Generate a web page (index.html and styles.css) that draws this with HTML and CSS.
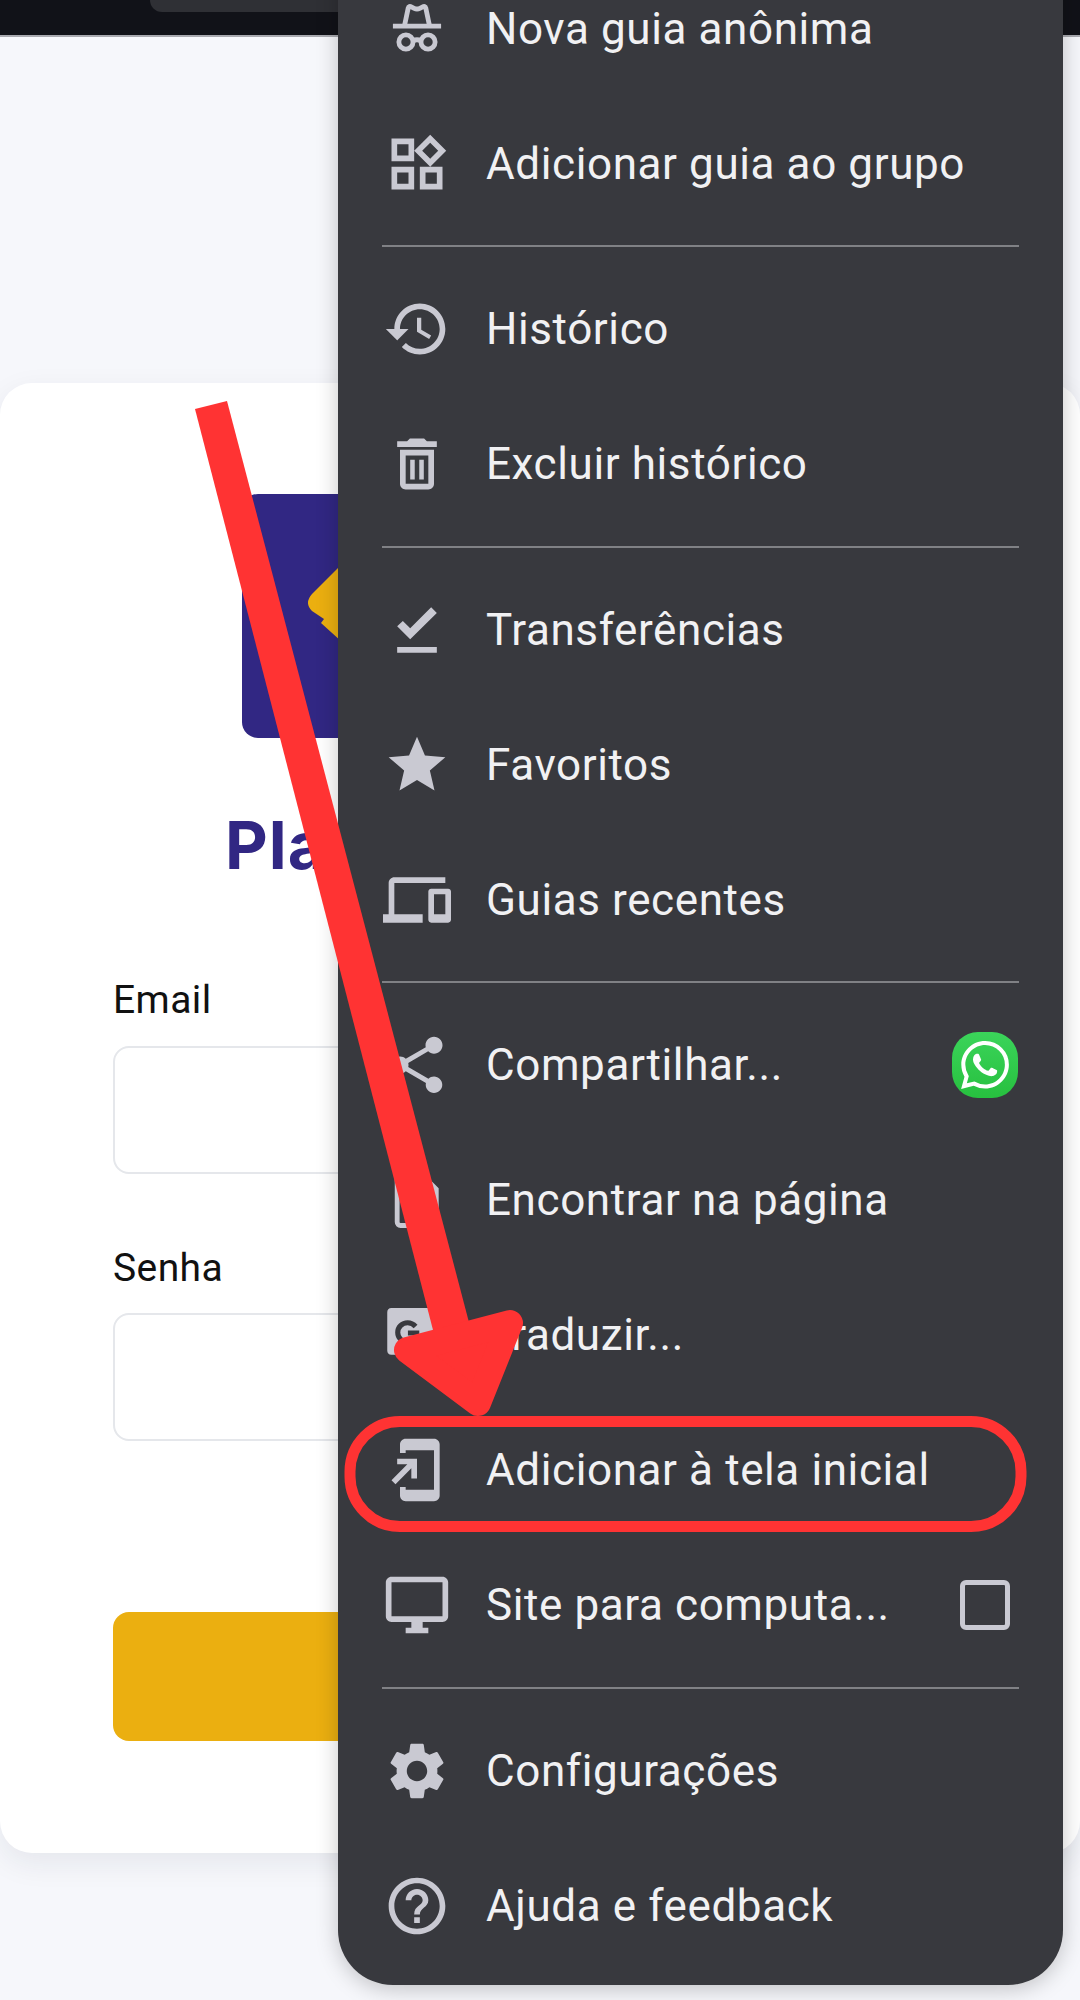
FILE: index.html
```html
<!doctype html>
<html lang="pt-BR">
<head>
    <meta charset="utf-8">
    <title>Adicionar à tela inicial</title>
    <link rel="stylesheet" href="styles.css">
</head>

<body>

    <!-- barra do navegador -->
    <div class="topbar"><div class="urlbar"></div></div>

    <!-- pagina de login -->
    <div class="card">
        <svg class="logo" width="596" height="244" viewBox="0 0 596 244">
            <rect width="596" height="244" rx="16" fill="#312783"/>
            <path d="M100 70 L70 100 Q62 109 70 117 L82 125 L79 129 L100 148 Z" fill="#ebaf10"/>
        </svg>
        <h1 class="title">Pla</h1>
        <label class="label label-first">Email</label>
        <input class="field" type="text">
        <label class="label">Senha</label>
        <input class="field" type="password">
        <button class="btn"></button>
    </div>

    <!-- menu do chrome -->
    <div class="menu">
        <div class="row">
            <svg class="ico" viewBox="0 0 24 24"><path class="line" d="M7.6 10.800 8.900 4.600C9 4 9.500 3.900 10 4.200l1 .5c.6.3 1.400.3 2 0l1-.5c.5-.3 1-.2 1.100.4l1.300 6.200"/><path class="line" d="M3.500 11h17"/><circle class="line" cx="8.100" cy="16.600" r="2.500"/><circle class="line" cx="15.900" cy="16.600" r="2.500"/><path class="line" d="M10.600 16.200c.9-.5 1.900-.5 2.800 0"/></svg>
            <span class="txt">Nova guia anônima</span>
        </div>
        <div class="row">
            <svg class="ico" viewBox="0 0 24 24"><path d="M16.66 4.52l2.83 2.83-2.83 2.83-2.83-2.83 2.83-2.83M9 5v4H5V5h4m10 10v4h-4v-4h4M9 15v4H5v-4h4m7.66-13.31L11 7.34 16.66 13l5.66-5.66-5.66-5.65zM11 3H3v8h8V3zm10 10h-8v8h8v-8zm-10 0H3v8h8v-8z"/></svg>
            <span class="txt">Adicionar guia ao grupo</span>
        </div>
        <div class="sep"></div>
        <div class="row">
            <svg class="ico" viewBox="0 0 24 24"><path d="M13 3c-4.97 0-9 4.03-9 9H1l3.89 3.89.07.14L9 12H6c0-3.87 3.13-7 7-7s7 3.13 7 7-3.13 7-7 7c-1.93 0-3.68-.79-4.94-2.06l-1.42 1.42C8.27 19.99 10.51 21 13 21c4.97 0 9-4.03 9-9s-4.03-9-9-9zm-1 5v5l4.28 2.54.72-1.21-3.5-2.08V8H12z"/></svg>
            <span class="txt">Histórico</span>
        </div>
        <div class="row">
            <svg class="ico" viewBox="0 0 24 24"><path d="M6 19c0 1.1.9 2 2 2h8c1.1 0 2-.9 2-2V7H6v12zM8 9h8v10H8V9zm7.5-5l-1-1h-5l-1 1H5v2h14V4h-3.5z"/><path d="M9.600 10.500h1.600v7H9.600zM12.800 10.500h1.600v7h-1.600z"/></svg>
            <span class="txt">Excluir histórico</span>
        </div>
        <div class="sep"></div>
        <div class="row">
            <svg class="ico" viewBox="0 0 24 24"><path d="M5 18h14v2H5v-2zm4.6-2.7L5 10.7l2-1.9 2.6 2.6L17 4l2 2-9.4 9.3z"/></svg>
            <span class="txt">Transferências</span>
        </div>
        <div class="row">
            <svg class="ico" viewBox="0 0 24 24"><path d="M12 17.27L18.18 21l-1.64-7.03L22 9.24l-7.19-.61L12 2 9.19 8.63 2 9.24l5.46 4.73L5.82 21z"/></svg>
            <span class="txt">Favoritos</span>
        </div>
        <div class="row">
            <svg class="ico" viewBox="0 0 24 24"><path d="M4 6h18V4H4c-1.1 0-2 .9-2 2v11H0v3h14v-3H4V6zm19 2h-6c-.55 0-1 .45-1 1v10c0 .55.45 1 1 1h6c.55 0 1-.45 1-1V9c0-.55-.45-1-1-1zm-1 9h-4v-7h4v7z"/></svg>
            <span class="txt">Guias recentes</span>
        </div>
        <div class="sep"></div>
        <div class="row">
            <svg class="ico" viewBox="0 0 24 24"><path d="M18 16.08c-.76 0-1.44.3-1.96.77L8.91 12.7c.05-.23.09-.46.09-.7s-.04-.47-.09-.7l7.05-4.11c.54.5 1.25.81 2.04.81 1.66 0 3-1.34 3-3s-1.34-3-3-3-3 1.34-3 3c0 .24.04.47.09.7L8.04 9.81C7.5 9.31 6.79 9 6 9c-1.66 0-3 1.34-3 3s1.34 3 3 3c.79 0 1.5-.31 2.04-.81l7.12 4.16c-.05.21-.08.43-.08.65 0 1.61 1.31 2.92 2.92 2.92 1.61 0 2.92-1.31 2.92-2.92s-1.31-2.92-2.92-2.92z"/></svg>
            <span class="txt">Compartilhar...</span>
            <div class="trail">
                <div class="wa">
                    <svg width="48" height="48" viewBox="0 0 24 24"><path fill="#fff" d="M17.472 14.382c-.297-.149-1.758-.867-2.03-.967-.273-.099-.471-.148-.67.15-.197.297-.767.966-.94 1.164-.173.199-.347.223-.644.075-.297-.15-1.255-.463-2.39-1.475-.883-.788-1.48-1.761-1.653-2.059-.173-.297-.018-.458.13-.606.134-.133.298-.347.446-.52.149-.174.198-.298.298-.497.099-.198.05-.371-.025-.52-.075-.149-.669-1.612-.916-2.207-.242-.579-.487-.5-.669-.51-.173-.008-.371-.01-.57-.01-.198 0-.52.074-.792.372-.272.297-1.04 1.016-1.04 2.479 0 1.462 1.065 2.875 1.213 3.074.149.198 2.096 3.2 5.077 4.487.709.306 1.262.489 1.694.625.712.227 1.36.195 1.871.118.571-.085 1.758-.719 2.006-1.413.248-.694.248-1.289.173-1.413-.074-.124-.272-.198-.57-.347m-5.421 7.403h-.004a9.87 9.87 0 01-5.031-1.378l-.361-.214-3.741.982.998-3.648-.235-.374a9.86 9.86 0 01-1.51-5.26c.001-5.45 4.436-9.884 9.888-9.884 2.64 0 5.122 1.03 6.988 2.898a9.825 9.825 0 012.893 6.994c-.003 5.45-4.437 9.884-9.885 9.884m8.413-18.297A11.815 11.815 0 0012.05 0C5.495 0 .16 5.335.157 11.892c0 2.096.547 4.142 1.588 5.945L.057 24l6.305-1.654a11.882 11.882 0 005.683 1.448h.005c6.554 0 11.89-5.335 11.893-11.893a11.821 11.821 0 00-3.48-8.413z"/></svg>
                </div>
            </div>
        </div>
        <div class="row">
            <svg class="ico" viewBox="0 0 24 24"><path class="line" d="M18.800 19.500V8.200L13.600 3H6.200C5.500 3 5 3.500 5 4.200v15.600c0 .7.5 1.200 1.200 1.200h11.200"/><circle class="line" cx="11.800" cy="13" r="3.800"/><path class="line" d="M14.600 15.800l4.200 3.700"/></svg>
            <span class="txt">Encontrar na página</span>
        </div>
        <div class="row">
            <svg class="ico" viewBox="0 0 24 24"><path d="M3 2.500h13c1 0 1.600.6 1.800 1.500l.4 2.500H21c1 0 1.500.6 1.500 1.500V20c0 .9-.6 1.500-1.500 1.500H12l-.8-2.500H3c-1 0-1.500-.6-1.500-1.500V4c0-.9.5-1.500 1.500-1.500z"/><path class="cut" d="M11.500 9c-.8-.9-1.800-1.300-2.800-1.300-2 0-3.500 1.500-3.500 3.400s1.500 3.400 3.500 3.400c1.900 0 3.200-1.300 3.200-3.200H8.800"/></svg>
            <span class="txt">Traduzir...</span>
        </div>
        <div class="row">
            <svg class="ico" viewBox="0 0 24 24"><path d="M18 1.01 8 1c-1.1 0-2 .9-2 2v3h2V5h10v14H8v-1H6v3c0 1.1.9 2 2 2h10c1.1 0 2-.9 2-2V3c0-1.1-.9-1.99-2-1.99zM10 15h2V8H5v2h3.59L3 15.59 4.41 17 10 11.41z"/></svg>
            <span class="txt">Adicionar à tela inicial</span>
        </div>
        <div class="row">
            <svg class="ico" viewBox="0 0 24 24"><path d="M21 2H3c-1.1 0-2 .9-2 2v12c0 1.1.9 2 2 2h7v2H8v2h8v-2h-2v-2h7c1.1 0 2-.9 2-2V4c0-1.1-.9-2-2-2zm0 14H3V4h18v12z"/></svg>
            <span class="txt">Site para computa...</span>
            <div class="trail"><div class="check"></div></div>
        </div>
        <div class="sep"></div>
        <div class="row">
            <svg class="ico" viewBox="0 0 24 24"><path d="M19.14 12.94c.04-.3.06-.61.06-.94 0-.32-.02-.64-.07-.94l2.03-1.58c.18-.14.23-.41.12-.61l-1.92-3.32c-.12-.22-.37-.29-.59-.22l-2.39.96c-.5-.38-1.03-.7-1.62-.94l-.36-2.54c-.04-.24-.24-.41-.48-.41h-3.84c-.24 0-.43.17-.47.41l-.36 2.54c-.59.24-1.13.57-1.62.94l-2.39-.96c-.22-.08-.47 0-.59.22L2.74 8.87c-.12.21-.08.47.12.61l2.03 1.58c-.05.3-.09.63-.09.94s.02.64.07.94l-2.03 1.58c-.18.14-.23.41-.12.61l1.92 3.32c.12.22.37.29.59.22l2.39-.96c.5.38 1.03.7 1.62.94l.36 2.54c.05.24.24.41.48.41h3.84c.24 0 .44-.17.47-.41l.36-2.54c.59-.24 1.13-.56 1.62-.94l2.39.96c.22.08.47 0 .59-.22l1.92-3.32c.12-.22.07-.47-.12-.61l-2.01-1.58zM12 15.6c-1.98 0-3.6-1.62-3.6-3.6s1.62-3.6 3.6-3.6 3.6 1.62 3.6 3.6-1.62 3.6-3.6 3.6z"/></svg>
            <span class="txt">Configurações</span>
        </div>
        <div class="row">
            <svg class="ico" viewBox="0 0 24 24"><path d="M11 18h2v-2h-2v2zm1-16C6.48 2 2 6.48 2 12s4.48 10 10 10 10-4.48 10-10S17.52 2 12 2zm0 18c-4.41 0-8-3.59-8-8s3.59-8 8-8 8 3.59 8 8-3.59 8-8 8zm0-14c-2.21 0-4 1.79-4 4h2c0-1.1.9-2 2-2s2 .9 2 2c0 2-3 1.75-3 5h2c0-2.25 3-2.5 3-5 0-2.21-1.79-4-4-4z"/></svg>
            <span class="txt">Ajuda e feedback</span>
        </div>
    </div>

    <!-- seta e destaque vermelhos por cima de tudo -->
    <svg class="marks" width="1080" height="2000" viewBox="0 0 1080 2000">
        <polygon points="195,409 227,401 471,1330 433,1330" fill="#ff3333"/>
        <polygon points="510,1323 407,1350 478,1403" fill="#ff3333" stroke="#ff3333" stroke-width="26" stroke-linejoin="round"/>
        <rect x="350" y="1421.500" width="671" height="105" rx="50" fill="none" stroke="#ff3333" stroke-width="11"/>
    </svg>

</body>
</html>
```

FILE: styles.css
```css
html, body {
    margin: 0;
    padding: 0;
}
body {
    position: relative;
    width: 1080px;
    height: 2000px;
    overflow: hidden;
    background: #f6f7fb;
    font-family: Roboto, "Liberation Sans", sans-serif;
}

/* barra do navegador */
.topbar {
    height: 35px;
    background: #111218;
    border-bottom: 2px solid #a9aab0;
}
.urlbar {
    width: 700px;
    height: 12px;
    margin-left: 150px;
    background: #2f3035;
    border-radius: 0 0 24px 24px;
}

/* cartao de login */
.card {
    display: flex;
    flex-direction: column;
    margin-top: 346px;
    padding: 111px 113px 112px;
    background: #fff;
    border-radius: 32px;
    box-shadow: 0 10px 30px rgba(30, 40, 70, .08);
}
.logo {
    display: block;
    align-self: center;
}
.title {
    margin: 67px 0 0 112px;
    color: #312783;
    font-family: Inter, "Liberation Sans", sans-serif;
    font-size: 66px;
    font-weight: 700;
    line-height: 80px;
    letter-spacing: 1px;
}
.label {
    display: block;
    margin: 72px 0 23px;
    color: #111;
    font-size: 39px;
    line-height: 44px;
    letter-spacing: .4px;
}
.label-first {
    margin-top: 93px;
    margin-bottom: 24px;
}
.field {
    display: block;
    box-sizing: border-box;
    width: 100%;
    height: 128px;
    background: #fff;
    border: 2px solid #e5e7eb;
    border-radius: 16px;
}
.btn {
    display: block;
    width: 100%;
    height: 129px;
    margin-top: 171px;
    background: #ebaf10;
    border: 0;
    border-radius: 16px;
}

/* menu */
.menu {
    position: absolute;
    top: -39px;
    left: 338px;
    width: 725px;
    padding-bottom: 12px;
    background: #38393e;
    border-radius: 0 0 55px 55px;
    box-shadow: 0 4px 22px rgba(0, 0, 0, .22);
}
.row {
    display: flex;
    align-items: center;
    height: 135px;
    padding: 0 45px;
}
.ico {
    flex: none;
    width: 68px;
    height: 68px;
    margin-right: 35px;
    fill: #c9c9d2;
}
.ico .line {
    fill: none;
    stroke: #c9c9d2;
    stroke-width: 1.7;
}
.ico .cut {
    fill: none;
    stroke: #38393e;
    stroke-width: 1.8;
}
.txt {
    flex: 1;
    color: #f1f1f3;
    font-size: 44px;
    letter-spacing: .6px;
    white-space: nowrap;
}
.sep {
    height: 2px;
    margin: 14.25px 44px;
    background: #808185;
}
.trail {
    display: flex;
    flex: none;
    justify-content: center;
    width: 66px;
}
.wa {
    display: flex;
    align-items: center;
    justify-content: center;
    width: 66px;
    height: 66px;
    background: linear-gradient(#3bd45a, #27c03f);
    border-radius: 26px;
}
.check {
    box-sizing: border-box;
    width: 50px;
    height: 50px;
    border: 5px solid #c9c9d2;
    border-radius: 6px;
}

/* marcacoes */
.marks {
    position: absolute;
    top: 0;
    left: 0;
}
```
